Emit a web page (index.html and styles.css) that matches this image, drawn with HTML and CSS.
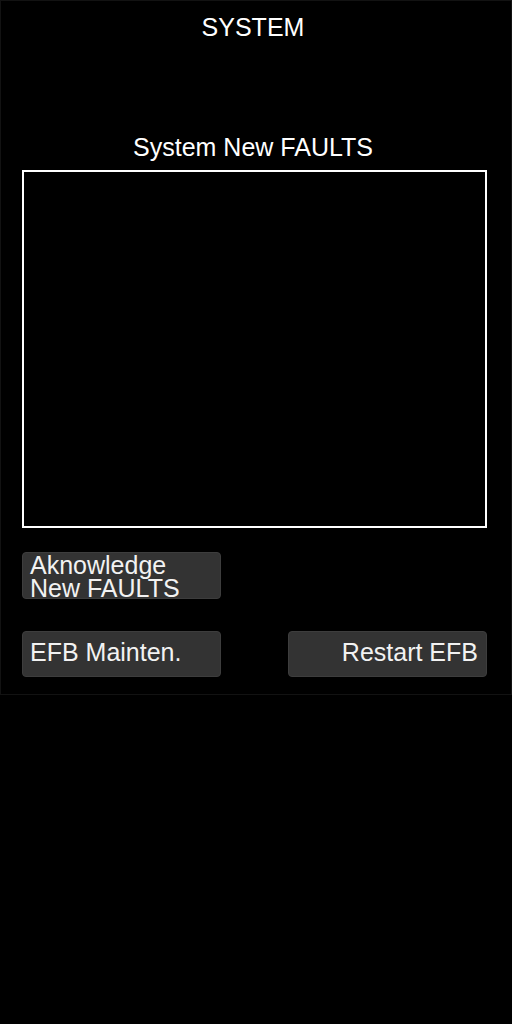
FILE: index.html
```html
<!DOCTYPE html>
<html>
<head>
<meta charset="utf-8">
<link rel="stylesheet" href="styles.css">
</head>
<body>
<div class="panel">
  <div class="title">SYSTEM</div>
  <div class="subtitle">System New FAULTS</div>
  <div class="fault-box"></div>
  <div class="actions">
    <div class="btn btn-double">Aknowledge<br>New FAULTS</div>
    <div class="spacer"></div>
    <div class="btn btn-single">EFB Mainten.</div>
    <div class="btn btn-single btn-right">Restart EFB</div>
  </div>
</div>
</body>
</html>
```
FILE: styles.css
```css
html, body {
  margin: 0;
  padding: 0;
  background: #000;
}
body {
  width: 512px;
  height: 1024px;
  font-family: "Liberation Sans", Arial, sans-serif;
  color: #fff;
}
.panel {
  box-sizing: border-box;
  width: 512px;
  height: 695px;
  border: 1px solid #121212;
  padding: 0 24px 0 21px;
}
.title {
  font-size: 25px;
  line-height: 28px;
  text-align: center;
  margin-top: 12px;
  padding-right: 3px;
}
.subtitle {
  font-size: 25px;
  line-height: 28px;
  text-align: center;
  margin-top: 92px;
  padding-right: 3px;
}
.fault-box {
  box-sizing: border-box;
  margin-top: 9px;
  height: 358px;
  border: 2px solid #fff;
}
.actions {
  display: grid;
  grid-template-columns: 199px 199px;
  justify-content: space-between;
  row-gap: 32px;
  margin-top: 24px;
}
.btn {
  box-sizing: border-box;
  height: 46px;
  background: #333;
  border: 1px solid #3d3d3d;
  border-radius: 4px;
  font-size: 25px;
  line-height: 23px;
  padding: 0 8px 0 7px;
  color: #f2f2f2;
  white-space: nowrap;
}
.btn-double {
  height: 47px;
  padding-top: 1px;
}
.btn-single {
  padding-top: 9px;
}
.btn-right {
  text-align: right;
}
```
